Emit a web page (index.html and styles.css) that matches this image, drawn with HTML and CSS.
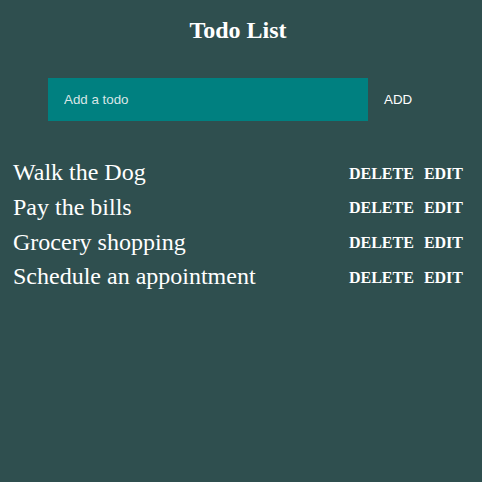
FILE: index.html
```html
<!DOCTYPE html>
<html>
<head>
<meta charset="utf-8">
<link rel="stylesheet" href="styles.css">
</head>
<body>
<div class="app">
  <h2 class="title">Todo List</h2>
  <form class="add-row">
    <input class="todo-input" type="text" placeholder="Add a todo">
    <button class="add-btn" type="button">ADD</button>
  </form>
  <ul class="todo-list">
    <li class="todo-item"><span class="todo-text">Walk the Dog</span><span class="actions"><button class="act">DELETE</button><button class="act">EDIT</button></span></li>
    <li class="todo-item"><span class="todo-text">Pay the bills</span><span class="actions"><button class="act">DELETE</button><button class="act">EDIT</button></span></li>
    <li class="todo-item"><span class="todo-text">Grocery shopping</span><span class="actions"><button class="act">DELETE</button><button class="act">EDIT</button></span></li>
    <li class="todo-item"><span class="todo-text">Schedule an appointment</span><span class="actions"><button class="act">DELETE</button><button class="act">EDIT</button></span></li>
  </ul>
</div>
</body>
</html>
```

FILE: styles.css
```css
html, body {
  margin: 0;
  padding: 0;
  background: #2f4f4f;
  height: 100%;
}
.app {
  font-family: "Liberation Serif", "Times New Roman", serif;
  color: #ffffff;
  padding: 16px 19px 0 13px;
}
.title {
  margin: 0;
  font-size: 24px;
  line-height: 28px;
  font-weight: bold;
  text-align: center;
}
.add-row {
  display: flex;
  align-items: center;
  gap: 16px;
  margin: 34px 0 0 35px;
}
.todo-input {
  width: 320px;
  height: 43px;
  box-sizing: border-box;
  border: none;
  outline: none;
  background: #008080;
  color: #ffffff;
  padding: 0 16px;
  font-family: "Liberation Sans", Arial, sans-serif;
  font-size: 13.333px;
}
.todo-input::placeholder {
  color: #d9e6e6;
  opacity: 1;
}
.add-btn {
  border: none;
  background: none;
  padding: 0;
  color: #ffffff;
  font-family: "Liberation Sans", Arial, sans-serif;
  font-size: 13.333px;
}
.todo-list {
  list-style: none;
  margin: 34px 0 0 0;
  padding: 0;
}
.todo-item {
  display: flex;
  justify-content: space-between;
  align-items: center;
  height: 34.67px;
}
.todo-text {
  font-size: 24px;
  line-height: 28px;
}
.actions {
  display: flex;
  gap: 10px;
  padding-top: 3px;
}
.act {
  border: none;
  background: none;
  padding: 0;
  color: #ffffff;
  font-family: "Liberation Serif", "Times New Roman", serif;
  font-weight: bold;
  font-size: 16px;
}
```
